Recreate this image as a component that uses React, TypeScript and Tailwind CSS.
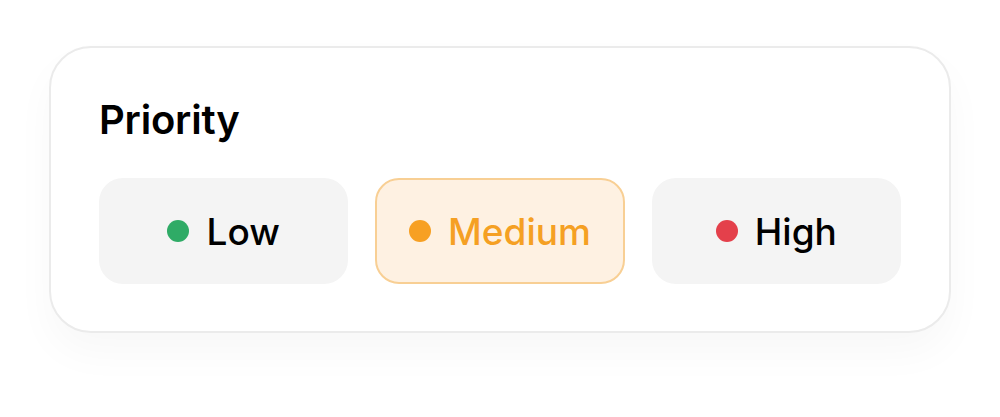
const options = [
  { label: "Low", dot: "bg-[#2fab66]", active: false },
  { label: "Medium", dot: "bg-[#f7a023]", active: true },
  { label: "High", dot: "bg-[#e4404b]", active: false },
]

export default function App() {
  return (
    <div className="flex min-h-[417px] justify-center bg-white pt-[46px] font-['Inter',sans-serif]">
      <div className="h-[287px] w-[902px] rounded-[42px] border-2 border-[#ebebeb] bg-white px-[48px] pt-[48px] shadow-[0_20px_40px_rgba(0,0,0,0.03)]">
        <h2 className="text-[40px] leading-[48px] font-semibold tracking-[-0.005em] text-black">
          Priority
        </h2>
        <div className="mt-[34px] grid grid-cols-3 gap-[27px]">
          {options.map((o) => (
            <button
              key={o.label}
              className={`flex h-[106px] items-center justify-center gap-[17px] rounded-[24px] border-2 ${
                o.active
                  ? "border-[#f8cf94] bg-[#fef1e2] text-[#f5a023]"
                  : "border-transparent bg-[#f4f4f4] text-black"
              }`}
            >
              <span className={`h-[22px] w-[22px] rounded-full ${o.dot}`} />
              <span className="text-[37px] leading-none font-medium">{o.label}</span>
            </button>
          ))}
        </div>
      </div>
    </div>
  )
}
